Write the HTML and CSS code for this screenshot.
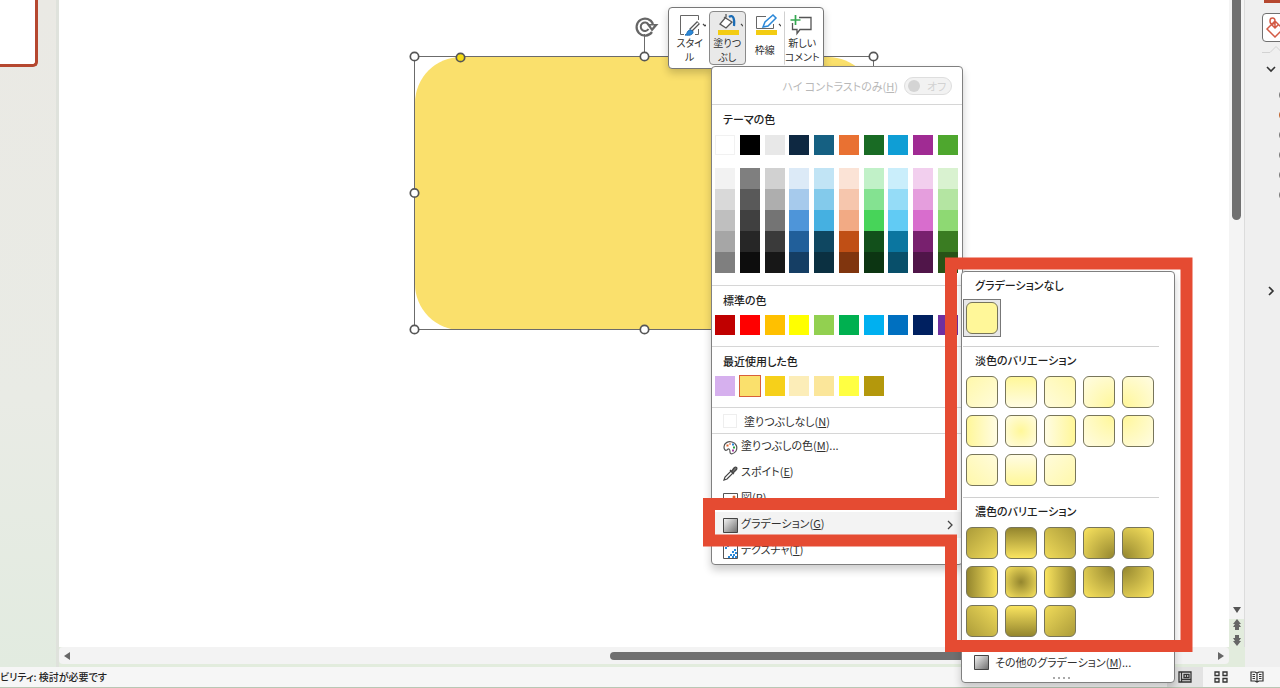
FILE: index.html
```html
<!DOCTYPE html>
<html lang="ja">
<head>
<meta charset="utf-8">
<title>グラデーション</title>
<link rel="stylesheet" href="styles.css">
</head>
<body>
<div class="app">
  <div class="workspace">
    <aside class="thumbs"><div class="slide-thumb"></div></aside>
    <main class="stage">
      <div class="stage-row">
        <div class="canvas">
          <svg class="drawing" width="480" height="330" viewBox="404 10 480 330" fill="none">
            <rect x="415" y="57" width="459" height="273" rx="46" fill="#fae06c"/>
            <path d="M414.500 56.500H873.500V329.500H414.500ZM644.500 34V56" stroke="#6b6b6b"/>
            <g fill="#fff" stroke="#555" stroke-width="1.700">
              <circle cx="414.500" cy="56.500" r="4.200"/><circle cx="644.500" cy="56.500" r="4.200"/><circle cx="873.500" cy="56.500" r="4.200"/>
              <circle cx="414.500" cy="193" r="4.200"/><circle cx="414.500" cy="329.500" r="4.200"/><circle cx="644.500" cy="329.500" r="4.200"/>
              <circle cx="460.500" cy="57.500" r="4.200" fill="#f5dc12"/>
            </g>
            <path d="M652 32A8.500 8.500 0 1 1 653 24" stroke="#666" stroke-width="2.200"/>
            <path d="M648.500 29a4.200 4.200 0 1 1 0-4.500" stroke="#666" stroke-width="2"/>
            <path d="M646.500 24h12l-6.500 7.500z" fill="#666"/>
            <path d="M650.500 25.500h3.500l-2 2.500z" fill="#fff"/>
          </svg>
        </div>
        <div class="vscroll">
          <div class="vthumb"></div>
          <div class="vbuttons">
            <button aria-label="下へ"><svg width="10" height="10"><path d="M1 2h8L5 8z" fill="#555"/></svg></button>
            <button aria-label="前のスライド"><svg width="10" height="12"><path d="M5 0l4 5H7l2 3H7v3H3V8H1l2-3H1z" fill="#666"/></svg></button>
            <button aria-label="次のスライド"><svg width="10" height="12"><path d="M5 11l4-5H7l2-3H7V0H3v3H1l2 3H1z" fill="#666"/></svg></button>
          </div>
        </div>
      </div>
      <div class="hscroll">
        <button aria-label="左へ"><svg width="8" height="10"><path d="M7 1v8L1 5z" fill="#666"/></svg></button>
        <div class="htrack"><div class="hthumb"></div></div>
        <button aria-label="右へ"><svg width="8" height="10"><path d="M1 1v8l6-4z" fill="#666"/></svg></button>
      </div>
    </main>
    <aside class="pane">
      <div class="pane-tab"></div>
      <button class="pane-fill" aria-label="塗りつぶしと線"><svg width="24" height="24" fill="none" stroke="#d35b45" stroke-width="1.500"><path d="M4 13l8-8 8 8-8 8zM12 12V5c0-4-5-4-5 0s5 4 5 0M9 9l3 3 3-3"/></svg></button>
      <svg class="pane-notch" width="20" height="9" fill="none" stroke="#d2d2d2"><path d="M0 7.500h8l6-6 6 6"/></svg>
      <button class="pane-arrow" aria-label="塗りつぶし"><svg width="10" height="8" fill="none" stroke="#333" stroke-width="1.600"><path d="M1 2l4 4 4-4"/></svg></button>
      <div class="radios">
        <input type="radio" name="fill" aria-label="なし"><input type="radio" name="fill" aria-label="単色" checked><input type="radio" name="fill" aria-label="グラデーション"><input type="radio" name="fill" aria-label="図"><input type="radio" name="fill" aria-label="パターン"><input type="radio" name="fill" aria-label="背景">
      </div>
      <button class="pane-arrow line-arrow" aria-label="線"><svg width="8" height="10" fill="none" stroke="#333" stroke-width="1.600"><path d="M2 1l4 4-4 4"/></svg></button>
    </aside>
  </div>
  <footer class="status">
    <div class="access">ビリティ: 検討が必要です</div>
    <div class="views">
      <button class="view on" aria-label="標準"><svg width="14" height="12" fill="none" stroke="#333" stroke-width="1.300"><path d="M1 1h12v10H1zM3.500 1v10M3.500 8.500H13M6 3.500h5v3H6zM8 5h1"/></svg></button>
      <button class="view" aria-label="一覧"><svg width="14" height="12" fill="none" stroke="#333" stroke-width="1.300"><path d="M1 1h4v3.500H1zM9 1h4v3.500H9zM1 7.500h4V11H1zM9 7.500h4V11H9z"/></svg></button>
      <button class="view" aria-label="閲覧"><svg width="14" height="12" fill="none" stroke="#333" stroke-width="1.200"><path d="M1 1h4l2 1 2-1h4v9H9l-2 1-2-1H1zM7 2v9M2.500 3.500H5M2.500 5.500H5M2.500 7.500H5M9 3.500h2.500M9 5.500h2.500M9 7.500h2.500"/></svg></button>
    </div>
  </footer>
</div>

<div class="minibar">
  <button class="tool"><svg width="32" height="24" viewBox="-2 0 32 24" fill="none"><path d="M8 22.500H4.500v-19h18V8M22.500 17v5.500H19" stroke="#666"/><path d="M22.500 10.500l-8 8" stroke="#555" stroke-width="4"/><path d="M22 11l-7 7" stroke="#fff" stroke-width="1.600"/><path d="M9 23c3-1 1-4 5-5 3 0 4 3 2 4-2 2-5 1-7 1z" fill="#2b88d8" stroke="#1b6cb5"/><path d="M27 12l2 2 2-2" stroke="#444" stroke-width="1.200"/></svg><span>スタイ<br>ル</span></button>
  <button class="tool on"><svg width="32" height="24" viewBox="-2 0 32 24" fill="none"><path d="M11 5l8 5-6 6-6-4 6-7V2" stroke="#555" stroke-width="1.300" fill="#fff"/><path d="M16 5c4-3 6 2 5 9" stroke="#1b6cb5" stroke-width="2.200"/><path d="M5 18h21v5H5z" fill="#f3cc12"/><path d="M28 12l2 2 2-2" stroke="#444" stroke-width="1.200"/></svg><span>塗りつ<br>ぶし</span></button>
  <button class="tool"><svg width="32" height="24" viewBox="-2 0 32 24" fill="none"><path d="M15 4.500H5.500v12h17V12" stroke="#666"/><path d="M12 15l2-5 8-7 3 3-8 8z" fill="#fff" stroke="#2b88d8" stroke-width="1.500"/><path d="M5 18h21v5H5z" fill="#f3cc12"/><path d="M28 12l2 2 2-2" stroke="#444" stroke-width="1.200"/></svg><span class="single">枠線</span></button>
  <button class="tool comment"><svg width="32" height="24" viewBox="0 0 32 24" fill="none"><path d="M13 5.500h12v12H14l-3 4v-4H6.500V11" stroke="#555" stroke-width="1.300"/><path d="M9.500 3v10M4.500 8h10" stroke="#36a852" stroke-width="1.700"/></svg><span>新しい<br>コメント</span></button>
</div>

<div class="menu">
  <label class="contrast" for="hc"><span>ハイ コントラストのみ(<u>H</u>)</span><span class="switch"><input type="checkbox" id="hc" disabled><i></i>オフ</span></label>
  <section class="theme"><h2>テーマの色</h2>
    <div class="swatches" data-colors="#ffffff #000000 #e8e8e8 #0e2841 #156082 #e97132 #196b24 #0f9ed5 #a02b93 #4ea72e"></div>
    <div class="tints"></div>
  </section>
  <section><h2>標準の色</h2>
    <div class="swatches" data-colors="#c00000 #ff0000 #ffc000 #ffff00 #92d050 #00b050 #00b0f0 #0070c0 #002060 #7030a0"></div>
  </section>
  <section><h2>最近使用した色</h2>
    <div class="swatches recent" data-colors="#d6b0ee #fae06c #f6d01a #fcedb8 #fbe69a #ffff42 #b4980c - - -"></div>
  </section>
  <button class="row none"><span class="empty"></span><span>塗りつぶしなし(<u>N</u>)</span></button>
  <div class="rows">
    <button class="row"><svg width="15" height="15" fill="none"><path d="M1 7c0-4 4-6 8-5 4 1 6 5 4 9-2 3-6 4-6 1 0-3-1-4-3-2C2 11 1 9 1 7z" stroke="#555" stroke-width="1.200"/><path d="M3.500 5.500h2M6.500 4h1" stroke="#e0632a" stroke-width="2"/><path d="M9 4.500h2" stroke="#2b88d8" stroke-width="2"/><path d="M10 7.500h2" stroke="#2aa045" stroke-width="2"/><path d="M9 10.500h2" stroke="#a13aa0" stroke-width="2"/></svg><span>塗りつぶしの色(<u>M</u>)...</span></button>
    <button class="row"><svg width="15" height="15" fill="none"><path d="M1 14l1-3 6-6 2 2-6 6z" stroke="#444" stroke-width="1.200"/><path d="M7 4l4 4M8.500 5.500L11 2c2-2 4 0 2 2l-3 3z" stroke="#444" stroke-width="1.300" fill="#777"/></svg><span>スポイト(<u>E</u>)</span></button>
    <button class="row"><svg width="15" height="15" fill="none"><path d="M.5 1.500h14v12H.5z" stroke="#555"/><path d="M1 12l5-5 5 6" stroke="#2b88d8"/><circle cx="11" cy="5" r="1.500" fill="#e0632a"/></svg><span>図(<u>P</u>)</span></button>
    <button class="row active"><svg width="15" height="15"><defs><linearGradient id="gray" x1="0" y1="0" x2="1" y2="1"><stop stop-color="#f7f7f7"/><stop offset="1" stop-color="#6c6c6c"/></linearGradient></defs><path d="M.5.5h14v14H.5z" fill="url(#gray)" stroke="#444"/></svg><span>グラデーション(<u>G</u>)</span><svg class="chev" width="8" height="10" fill="none" stroke="#444" stroke-width="1.300"><path d="M2 1l4 4-4 4"/></svg></button>
    <button class="row"><svg width="15" height="15" fill="none"><path d="M.5.5h14v14H.5z" stroke="#555"/><path d="M2 4h2M4 2h2M11 6h2M9 8h2M12 9h2M7 11h2M10 11h2M5 13h2M9 13h2M12 13h2" stroke="#2b88d8" stroke-width="1.800"/></svg><span>テクスチャ(<u>T</u>)</span></button>
  </div>
</div>

<div class="submenu">
  <section><h2>グラデーションなし</h2><button class="chosen" aria-label="グラデーションなし"><i class="tile plain"></i></button></section>
  <section><h2>淡色のバリエーション</h2><div class="tiles light"></div></section>
  <section class="last"><h2>濃色のバリエーション</h2><div class="tiles dark"></div></section>
  <button class="row more"><svg width="15" height="15"><path d="M.5.5h14v14H.5z" fill="url(#gray)" stroke="#444"/></svg><span>その他のグラデーション(<u>M</u>)...</span></button>
  <div class="grip"><i></i><i></i><i></i><i></i></div>
</div>

<svg class="callout" width="490" height="396" viewBox="703 257 490 396" fill="none" stroke="#e54b32" stroke-width="12"><path d="M951 263.500H1186.500V646H951V540.500H709V504H951Z"/></svg>
<script src="app.js"></script>
</body>
</html>
```
FILE: styles.css
```css
* { box-sizing: border-box; }
body {
  margin: 0;
  color: #303030;
  font: 11px/14px "Noto Sans CJK JP", sans-serif;
  font-feature-settings: "palt";
  overflow: hidden;
}
button { margin: 0; padding: 0; border: 0; background: none; font: inherit; font-feature-settings: inherit; color: inherit; display: block; }
svg { display: block; flex: none; }
h2 { margin: 0; padding-left: 12px; height: 29px; font-size: 11px; line-height: 26px; font-weight: 500; color: #222; }

.app { height: 100vh; display: flex; flex-direction: column; background: #e2ecdd; }
.workspace { flex: 1; min-height: 0; display: flex; }
.thumbs { width: 59px; background: linear-gradient(#eae9e4, #e9ebe5 60%, #e2ebe0); border-right: 3px solid #dfe2dc; }
.slide-thumb { width: 38px; height: 67px; background: #fff; border: solid #b5472f; border-width: 0 3px 3px 0; border-radius: 0 0 5px 0; }
.stage { flex: 1; min-width: 0; display: flex; flex-direction: column; margin-bottom: 3px; }
.stage-row { flex: 1; min-height: 0; display: flex; }
.canvas { flex: 1; background: #fff; position: relative; }
.drawing { position: absolute; left: 345px; top: 10px; }
.vscroll { width: 16px; background: #f4f4f4; display: flex; flex-direction: column; justify-content: space-between; align-items: center; border-right: 1px solid #dcdcdc; }
.vthumb { width: 9px; height: 220px; background: #707070; border-radius: 0 0 5px 5px; }
.vbuttons { width: 100%; display: flex; flex-direction: column; align-items: center; gap: 4px; background: linear-gradient(#f4f4f4 14px, #e2ecdd 14px); }
.hscroll { height: 17px; margin-right: 16px; padding: 0 4px; background: #f3f3f3; display: flex; align-items: center; gap: 6px; border-radius: 4px; }
.htrack { flex: 1; display: flex; }
.hthumb { margin-left: 47%; width: 36%; height: 8px; border-radius: 4px; background: #707070; }

.pane { width: 35px; background: #efefef; overflow: hidden; display: flex; flex-direction: column; padding-left: 17px; }
.pane-tab { width: 30px; height: 3px; background: #b5472f; margin-left: 2px; flex: none; }
.pane-fill { margin-top: 10px; width: 32px; height: 29px; flex: none; border: 1px solid #707070; border-radius: 4px; background: #fff; }
.pane-notch { margin-top: 3px; }
.pane-arrow { margin: 11px 0 0 4px; }
.line-arrow { margin: 85px 0 0 5px; }
.radios { display: flex; flex-direction: column; gap: 8px; padding: 16px 0 0 17px; }
.radios input { appearance: none; margin: 0; width: 12px; height: 12px; border: 1px solid #777; border-radius: 50%; flex: none; }
.radios input:checked { border-color: #c0602a; }

.status { height: 21px; background: #f6f6f6; border-bottom: 1px solid #b9c7b4; display: flex; justify-content: space-between; }
.access { display: flex; align-items: center; white-space: nowrap; color: #222; font-size: 10px; font-weight: 500; }
.views { display: flex; padding-right: 5px; }
.view { width: 36px; display: flex; align-items: center; justify-content: center; }
.view.on { background: #e3e3e3; }

.minibar { position: absolute; left: 668px; top: 7px; width: 156px; height: 62px; padding: 3px 2px; display: flex; background: #fff; border: 1px solid #777; border-radius: 4px; box-shadow: 0 4px 8px #0003; }
.tool { flex: 1; min-width: 0; display: flex; flex-direction: column; align-items: center; justify-content: flex-start; font-size: 10px; line-height: 14px; border: 1px solid transparent; white-space: nowrap; }
.tool.on { background: #e9e9e9; border-color: #8a8a8a; border-radius: 4px; }
.tool.comment { border-left-color: #d0d0d0; }
.single { line-height: 28px; }

.menu, .submenu { position: absolute; background: #fff; border: 1px solid #808080; border-radius: 4px; box-shadow: 0 5px 9px #0003; }
.menu { left: 711px; top: 66px; width: 252px; }
.menu section { padding: 0 4px 11px 3px; border-bottom: 1px solid #d6d6d6; }
.menu h2 { padding-left: 8px; line-height: 29px; }
.menu .theme { padding-bottom: 12px; }
.menu .theme h2 { height: 30px; }
.contrast { height: 38px; display: flex; align-items: center; justify-content: flex-end; gap: 6px; padding-right: 10px; border-bottom: 1px solid #d6d6d6; color: #b8b8b8; }
.switch { width: 48px; height: 18px; border: 1px solid #dedede; border-radius: 9px; background: #f2f2f2; display: flex; align-items: center; gap: 7px; padding-left: 3px; color: #d2d2d2; }
.switch input { display: none; }
.switch i { width: 12px; height: 12px; border-radius: 50%; background: #d4d4d4; }
.swatches, .tints { display: flex; justify-content: space-between; }
.tints { padding-top: 13px; }
.swatch { width: 20px; height: 20px; }
.swatch.pale { border: 1px solid #f1f1f1; }
.swatch.picked { outline: 1px solid #d9603a; }
.tints .swatch { height: 21px; }
.row { width: 100%; height: 26px; padding: 0 8px 0 11px; display: flex; align-items: center; gap: 4px; text-align: left; white-space: nowrap; }
.row span { line-height: 14px; }
.rows .row { gap: 3px; }
.rows .row span { padding-bottom: 4px; }
.none { border-bottom: 1px solid #d6d6d6; gap: 7px; }
.empty { width: 14px; height: 14px; border: 1px solid #eee; }
.row.active { background: #f3f3f3; }
.chev { margin-left: auto; }

.submenu { left: 961px; top: 271px; width: 214px; padding: 0 15px 0 1px; }
.submenu section { border-bottom: 1px solid #d0d0d0; }
.submenu section:first-child h2 { height: 27px; }
.chosen { width: 38px; height: 38px; padding: 2px; border: 1px solid #777; background: #e8e8e8; margin-bottom: 9px; }
.tile { display: block; width: 32px; height: 32px; border: 1px solid #77755a; border-radius: 6px; }
.plain { background: #fff799; }
.tiles { display: grid; grid-template-columns: repeat(5, 32px); gap: 7px; padding: 0 3px 11px; }
.light { --from: #fff799; --to: #fffce3; }
.dark { --from: #94862e; --to: #fae45f; }
.submenu .last { padding-bottom: 1px; }
.more { height: 24px; gap: 6px; }
.grip { display: flex; justify-content: center; gap: 3px; height: 8px; padding-top: 3px; }
.grip i { width: 2px; height: 2px; background: #aaa; }
.callout { position: absolute; left: 703px; top: 257px; pointer-events: none; }
```
FILE: app.js
```js
function swatch(color) {
  const b = document.createElement("button");
  b.className = "swatch";
  if (color === "-") { b.disabled = true; return b; }
  b.style.background = color;
  b.setAttribute("aria-label", color);
  if (color === "#ffffff") b.classList.add("pale");
  return b;
}
document.querySelectorAll(".swatches").forEach(el =>
  el.dataset.colors.split(" ").forEach(c => el.append(swatch(c))));
document.querySelectorAll(".recent .swatch")[1].classList.add("picked");

const tints = [
  "#f2f2f2 #d9d9d9 #bfbfbf #a6a6a6 #7f7f7f",
  "#7f7f7f #595959 #404040 #262626 #0d0d0d",
  "#d1d1d1 #aeaeae #747474 #3a3a3a #171717",
  "#dceaf7 #a6caec #4e95d9 #215f9a #153e64",
  "#c1e4f5 #83caeb #45b0e1 #0f4761 #0b3041",
  "#fbe3d6 #f6c6ad #f2aa84 #c04f15 #80350e",
  "#c1f1c8 #84e291 #47d459 #12501b #0c3512",
  "#caeefb #95dcf7 #61cbf4 #0b76a0 #084f6a",
  "#f2cfee #e59edd #d86dcd #78206e #501549",
  "#d9f2d0 #b4e5a2 #8ed973 #3a7c22 #275317"
];
const tintBox = document.querySelector(".tints");
tints.forEach(list => {
  const col = document.createElement("div");
  list.split(" ").forEach(c => col.append(swatch(c)));
  tintBox.append(col);
});

const ends = "var(--from), var(--to))";
const soft = "var(--from) -35%, var(--to) 115%)";
const variants = [
  "linear-gradient(135deg," + soft, "linear-gradient(180deg," + ends, "linear-gradient(225deg," + soft,
  "radial-gradient(circle at 100% 100%," + ends, "radial-gradient(circle at 0 100%," + ends,
  "linear-gradient(90deg," + ends, "radial-gradient(circle at 50% 50%," + ends, "linear-gradient(270deg," + ends,
  "radial-gradient(circle at 100% 0," + ends, "radial-gradient(circle at 0 0," + ends,
  "linear-gradient(45deg," + soft, "linear-gradient(0deg," + ends, "linear-gradient(315deg," + soft
];
document.querySelectorAll(".tiles").forEach(box =>
  variants.forEach((v, i) => {
    const b = document.createElement("button");
    b.className = "tile";
    b.setAttribute("aria-label", "バリエーション " + (i + 1));
    b.style.background = v;
    box.append(b);
  }));
```
